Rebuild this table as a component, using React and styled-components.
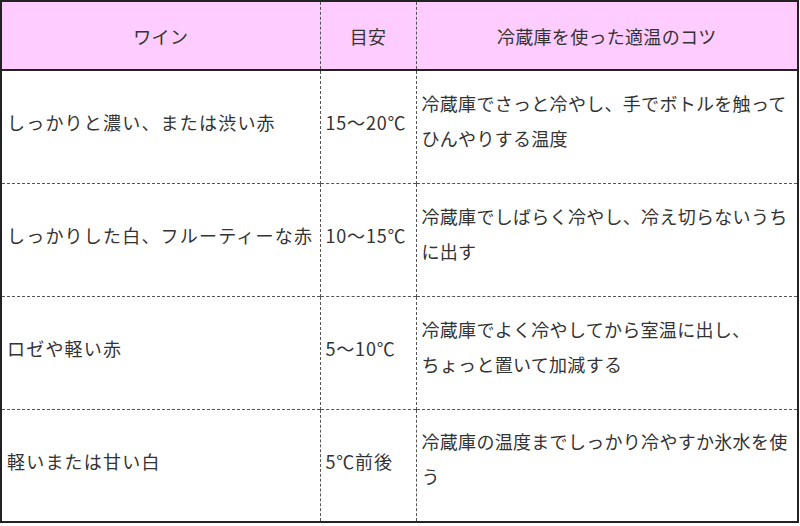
import React from "react";
import styled, { createGlobalStyle } from "styled-components";

const Global = createGlobalStyle`
  html, body { margin: 0; padding: 0; background: #fff; }
  body { font-family: "Noto Sans CJK JP", "Noto Sans", sans-serif; color: #333; }
`;

const Table = styled.table`
  border-collapse: collapse;
  width: 799px;
  table-layout: fixed;
  border: 2px solid #222;
  font-size: 18px;
  letter-spacing: 0.3px;
`;

const HeadRow = styled.tr`
  height: 69px;
`;

const Row = styled.tr`
  height: 113px;
`;

const HeadCell = styled.th`
  background: #ffccff;
  font-weight: normal;
  text-align: center;
  vertical-align: middle;
  padding: 0;
  border-bottom: 2px solid #222;
  border-left: ${(p) => (p.$first ? "none" : "1px dashed #555")};
`;

const Cell = styled.td`
  padding: 0 0 ${(p) => (p.$tip ? "12px" : "8px")} 5px;
  vertical-align: middle;
  line-height: 35px;
  white-space: ${(p) => (p.$tip ? "normal" : "nowrap")};
  letter-spacing: ${(p) => (p.$first ? "1.2px" : p.$temp ? "0.8px" : "0.3px")};
  border-top: ${(p) => (p.$firstRow ? "none" : "1px dashed #555")};
  border-left: ${(p) => (p.$first ? "none" : "1px dashed #555")};
`;

const rows = [
  ["しっかりと濃い、または渋い赤", "15～20℃", ["冷蔵庫でさっと冷やし、手でボトルを触ってひんやりする温度"]],
  ["しっかりした白、フルーティーな赤", "10～15℃", ["冷蔵庫でしばらく冷やし、冷え切らないうちに出す"]],
  ["ロゼや軽い赤", "5～10℃", ["冷蔵庫でよく冷やしてから室温に出し、", "ちょっと置いて加減する"]],
  ["軽いまたは甘い白", "5℃前後", ["冷蔵庫の温度までしっかり冷やすか氷水を使う"]],
];

export default function App() {
  return (
    <>
      <Global />
      <Table>
        <colgroup>
          <col style={{ width: 319 }} />
          <col style={{ width: 96 }} />
          <col />
        </colgroup>
        <thead>
          <HeadRow>
            <HeadCell $first>ワイン</HeadCell>
            <HeadCell>目安</HeadCell>
            <HeadCell>冷蔵庫を使った適温のコツ</HeadCell>
          </HeadRow>
        </thead>
        <tbody>
          {rows.map((r, i) => (
            <Row key={i}>
              <Cell $first $firstRow={i === 0}>{r[0]}</Cell>
              <Cell $temp $firstRow={i === 0}>{r[1]}</Cell>
              <Cell $firstRow={i === 0} $tip>
                {r[2].map((t, j) => (
                  <React.Fragment key={j}>
                    {j > 0 && <br />}
                    {t}
                  </React.Fragment>
                ))}
              </Cell>
            </Row>
          ))}
        </tbody>
      </Table>
    </>
  );
}
